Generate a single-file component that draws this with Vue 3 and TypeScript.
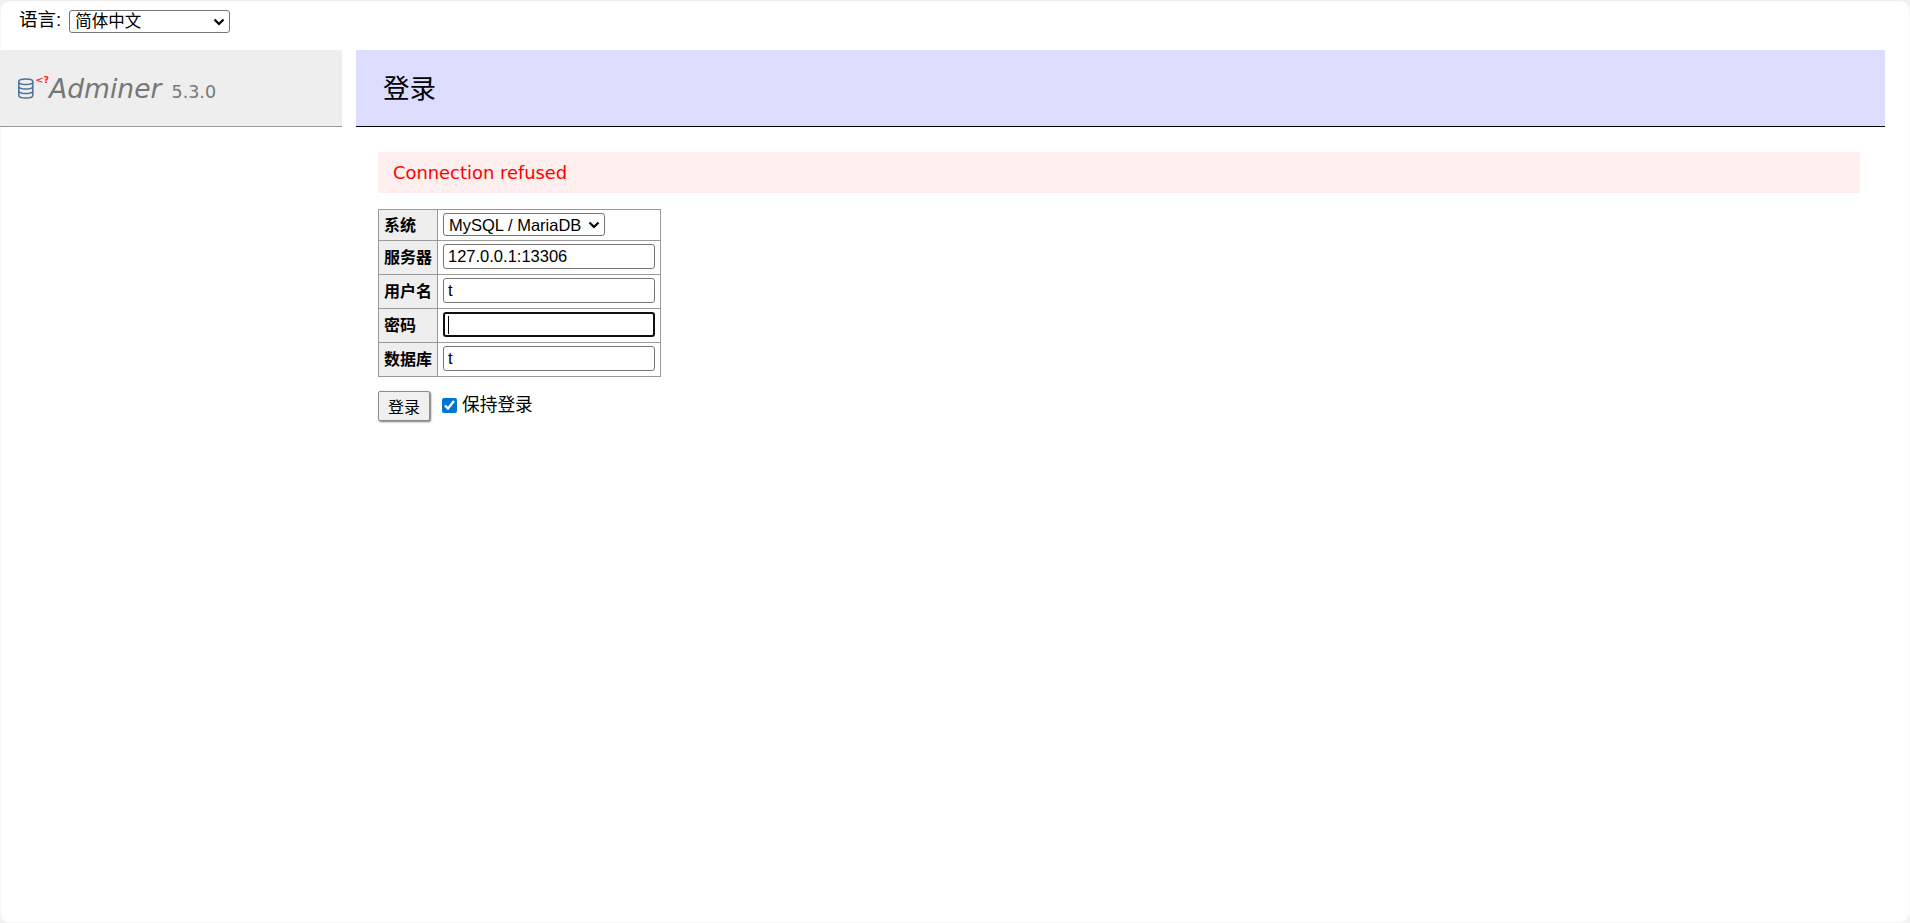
<script setup lang="ts">
import { ref } from 'vue'

interface Field {
  label: string
  value: string
  focused?: boolean
}

const language = ref('zh')
const driver = ref('server')
const permanent = ref(true)
const fields = ref<Field[]>([
  { label: '服务器', value: '127.0.0.1:13306' },
  { label: '用户名', value: 't' },
  { label: '密码', value: '', focused: true },
  { label: '数据库', value: 't' },
])
</script>

<template>
  <div class="frame">
    <form class="lang">
      <label class="lang-label">语言:</label>
      <select v-model="language" class="lang-select">
        <option value="zh">简体中文</option>
        <option value="en">English</option>
      </select>
    </form>

    <div class="page">
      <aside class="side">
        <div class="side-head">
          <svg class="logo" width="32" height="26" viewBox="0 0 32 26" aria-hidden="true">
            <g fill="none" stroke="#4f7196" stroke-width="1.5">
              <path d="M1.800 6.500c0-1.500 3-2.500 7-2.500s7 1 7 2.500v14c0 1.500-3 2.500-7 2.500s-7-1-7-2.500z" />
              <path d="M1.800 7c0 1.600 3 2.500 7 2.500s7-.9 7-2.500" />
              <path d="M1.800 11.500c0 1.600 3 2.500 7 2.500s7-.9 7-2.500" />
              <path d="M1.800 16c0 1.600 3 2.500 7 2.500s7-.9 7-2.500" />
            </g>
            <text x="18.500" y="8" class="logo-tag">&lt;?</text>
          </svg>
          <span class="brand">Adminer</span>
          <span class="version">5.3.0</span>
        </div>
      </aside>

      <main class="content">
        <h2 class="title">登录</h2>
        <div class="body">
          <div class="error">Connection refused</div>
          <table class="login">
            <tbody>
              <tr class="first">
                <th>系统</th>
                <td>
                  <select v-model="driver" class="driver">
                    <option value="server">MySQL / MariaDB</option>
                    <option value="sqlite">SQLite</option>
                  </select>
                </td>
              </tr>
              <tr v-for="f in fields" :key="f.label">
                <th>{{ f.label }}</th>
                <td>
                  <div class="field" :class="{ focused: f.focused }">
                    <input class="text" type="text" :value="f.value" />
                    <span v-if="f.focused" class="caret"></span>
                  </div>
                </td>
              </tr>
            </tbody>
          </table>
          <div class="actions">
            <button type="button" class="submit">登录</button>
            <label class="keep">
              <input v-model="permanent" type="checkbox" class="check" />
              <span>保持登录</span>
            </label>
          </div>
        </div>
      </main>
    </div>
  </div>
</template>

<style>
html,
body {
  background: #f2f2f2;
}
</style>

<style scoped>
.frame {
  box-sizing: border-box;
  height: 923px;
  padding-top: 1px;
  background: #fff;
  border-radius: 10px;
  box-shadow: inset 0 1px 0 #eeeeee, inset 0 0 0 1px #f7f7f7;
  color: #000;
  font-family: "Liberation Sans", "Noto Sans CJK SC", sans-serif;
  overflow: hidden;
}
.lang {
  height: 49px;
  display: flex;
  align-items: flex-start;
  padding: 9px 0 0 19px;
  box-sizing: border-box;
  gap: 8px;
}
.lang-label {
  font-size: 18.500px;
  line-height: 20px;
  font-family: "Liberation Sans", "Noto Sans CJK SC", sans-serif;
}
select {
  appearance: none;
  background-color: #fff;
  background-image: url("data:image/svg+xml,%3Csvg xmlns='http://www.w3.org/2000/svg' width='12' height='8' viewBox='0 0 12 8'%3E%3Cpath d='M1.500 1.500L6 6l4.500-4.500' fill='none' stroke='%23000' stroke-width='2.200'/%3E%3C/svg%3E");
  background-repeat: no-repeat;
  background-position: right 4px center;
  color: #000;
}
.lang-select {
  width: 161px;
  height: 23px;
  font-size: 16.500px;
  line-height: 21px;
  font-family: "Liberation Sans", "Noto Sans CJK SC", sans-serif;
  padding: 0 0 0 5px;
  border: 1px solid #767676;
  border-radius: 3px;
}
.page {
  display: flex;
  gap: 14px;
  padding-right: 25px;
}
.side {
  width: 342px;
  flex: none;
}
.side-head {
  box-sizing: border-box;
  height: 77px;
  background: #eee;
  border-bottom: 1px solid #999;
  display: flex;
  align-items: flex-start;
  padding: 25px 0 0 17px;
  font-family: "DejaVu Sans", sans-serif;
  color: #777;
}
.logo {
  flex: none;
  display: block;
}
.logo-tag {
  font-size: 9.500px;
  font-weight: 700;
  fill: #f22;
  font-family: "DejaVu Sans", sans-serif;
}
.brand {
  font-size: 26.600px;
  font-style: italic;
  line-height: 32px;
  margin-top: -2px;
}
.version {
  font-size: 17.500px;
  line-height: 20px;
  margin-left: 10px;
  margin-top: 7px;
}
.content {
  flex: 1;
  min-width: 0;
}
.title {
  box-sizing: border-box;
  height: 77px;
  margin: 0;
  background: #ddf;
  border-bottom: 1px solid #000;
  padding: 0 0 0 27px;
  font-size: 26.500px;
  font-weight: 400;
  line-height: 74px;
  font-family: "Noto Sans CJK SC", sans-serif;
}
.body {
  padding: 25px 25px 0 22px;
}
.error {
  height: 41px;
  box-sizing: border-box;
  padding-left: 15px;
  background: #fee;
  color: #f00;
  font-family: "DejaVu Sans", sans-serif;
  font-size: 17.900px;
  line-height: 42px;
}
.login {
  margin-top: 16px;
  border-collapse: collapse;
  border: 1px solid #999;
  width: 283px;
  table-layout: fixed;
}
.login th,
.login td {
  box-sizing: border-box;
  border: 1px solid #999;
  height: 34px;
  vertical-align: middle;
}
.login tr.first th,
.login tr.first td {
  height: 31px;
}
.login th {
  width: 59px;
  background: #eee;
  text-align: left;
  padding: 0 0 3px 5px;
  font-size: 16px;
  font-weight: 700;
  font-family: "Noto Sans CJK SC", sans-serif;
}
.login td {
  padding: 0 0 2px 5px;
}
.login tr.first td {
  padding-bottom: 1px;
}
.driver {
  display: block;
  width: 162px;
  height: 23px;
  padding: 0 0 0 5px;
  font-size: 16.500px;
  font-family: "Liberation Sans", sans-serif;
  border: 1px solid #767676;
  border-radius: 3px;
}
.field {
  position: relative;
  width: 212px;
  height: 25px;
}
.text {
  box-sizing: border-box;
  display: block;
  width: 100%;
  height: 100%;
  margin: 0;
  padding: 0 4px;
  font-size: 16.500px;
  font-family: "Liberation Sans", sans-serif;
  color: #000;
  background: #fff;
  border: 1px solid #767676;
  border-radius: 3px;
  outline: none;
}
.field.focused .text {
  border: 2px solid #101010;
}
.caret {
  position: absolute;
  left: 5px;
  top: 4px;
  width: 1px;
  height: 18px;
  background: #000;
}
.actions {
  display: flex;
  align-items: flex-start;
  margin-top: 14px;
}
.submit {
  box-sizing: border-box;
  width: 52px;
  height: 30px;
  padding: 0;
  margin: 0;
  font-size: 16px;
  font-family: "Noto Sans CJK SC", sans-serif;
  color: #000;
  background: #f0f0f0;
  border: 1px solid #8c8c8c;
  border-radius: 2px;
  box-shadow: 1px 1px 2px #777;
}
.keep {
  display: flex;
  align-items: center;
  margin-left: 12px;
  gap: 5px;
  font-size: 17.700px;
  line-height: 24px;
  font-family: "Noto Sans CJK SC", sans-serif;
}
.check {
  width: 15px;
  height: 15px;
  margin: 4px 0 0;
  accent-color: #0075d8;
}
</style>
